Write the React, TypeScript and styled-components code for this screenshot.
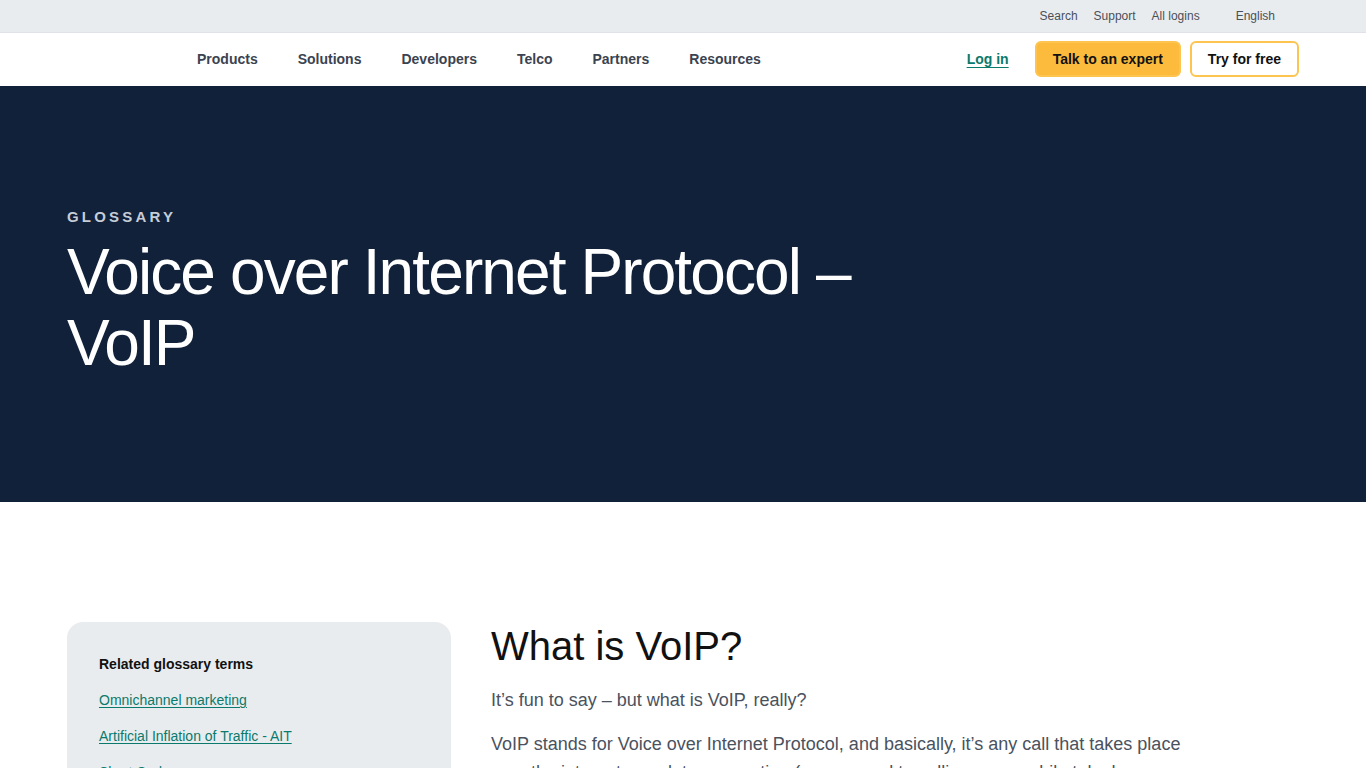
import React from "react";
import styled, { createGlobalStyle } from "styled-components";

const GlobalStyle = createGlobalStyle`
  html, body {
    margin: 0;
    padding: 0;
    background: #ffffff;
    font-family: "Liberation Sans", Arial, sans-serif;
  }
  * {
    box-sizing: border-box;
  }
`;

const TopBar = styled.div`
  height: 33px;
  background-color: #e9ecef;
  border-bottom: 1px solid #dfe3e7;
  display: flex;
  justify-content: flex-end;
  align-items: center;
  padding-right: 91px;
`;

const TopLinks = styled.div`
  display: flex;
  align-items: center;
  gap: 16px;
`;

const TopLink = styled.a<{ $spaced?: boolean }>`
  font-size: 12px;
  color: #4a5058;
  text-decoration: none;
  margin-left: ${(p) => (p.$spaced ? "20px" : "0")};
`;

const NavBar = styled.nav`
  height: 53px;
  background-color: #ffffff;
  display: flex;
  align-items: center;
  padding: 0 67px 2px 197px;
`;

const NavLinks = styled.div`
  display: flex;
  align-items: center;
  gap: 40px;
  flex: 1;
`;

const NavLink = styled.a`
  font-size: 14px;
  font-weight: 700;
  color: #3b4350;
  text-decoration: none;
`;

const NavActions = styled.div`
  display: flex;
  align-items: center;
`;

const LoginLink = styled.a`
  font-size: 14px;
  font-weight: 700;
  color: #0a7a6c;
  text-decoration: underline;
  text-underline-offset: 3px;
  margin-right: 26px;
`;

const Button = styled.a<{ $variant: "solid" | "outline" }>`
  display: inline-flex;
  align-items: center;
  justify-content: center;
  height: 36px;
  padding: 0 16px;
  border-radius: 6px;
  font-size: 14px;
  font-weight: 700;
  color: #111111;
  text-decoration: none;
  background-color: ${(p) => (p.$variant === "solid" ? "#fdbb3d" : "#ffffff")};
  border: 2px solid #fdc550;
  margin-left: ${(p) => (p.$variant === "outline" ? "9px" : "0")};
`;

const Hero = styled.header`
  background-color: #12213a;
  height: 416px;
  padding: 122px 67px 0;
`;

const Eyebrow = styled.div`
  font-size: 15px;
  font-weight: 700;
  letter-spacing: 3.2px;
  color: #c5cdd8;
  margin-bottom: 12px;
`;

const HeroTitle = styled.h1`
  margin: 0;
  max-width: 830px;
  font-size: 64px;
  font-weight: 400;
  line-height: 71px;
  letter-spacing: -1.9px;
  color: #ffffff;
`;

const Body = styled.main`
  display: grid;
  grid-template-columns: 384px 1fr;
  column-gap: 40px;
  padding: 120px 67px 0;
`;

const Sidebar = styled.aside`
  background-color: #e9ecef;
  border-radius: 16px;
  padding: 34px 32px;
  min-height: 200px;
`;

const SidebarTitle = styled.h4`
  margin: 0 0 19px;
  font-size: 14px;
  font-weight: 700;
  color: #111111;
`;

const TermList = styled.ul`
  list-style: none;
  margin: 0;
  padding: 0;
  display: flex;
  flex-direction: column;
  gap: 18px;
`;

const TermLink = styled.a`
  font-size: 14px;
  color: #0a7a6c;
  text-decoration: underline;
  text-underline-offset: 2px;
`;

const Article = styled.article`
  max-width: 700px;
`;

const SectionTitle = styled.h2`
  margin: 0 0 16px;
  font-size: 40px;
  font-weight: 400;
  line-height: 48px;
  color: #111111;
`;

const Paragraph = styled.p`
  margin: 0 0 16px;
  font-size: 18px;
  line-height: 28px;
  color: #4a525e;
`;

const navItems = ["Products", "Solutions", "Developers", "Telco", "Partners", "Resources"];
const terms = ["Omnichannel marketing", "Artificial Inflation of Traffic - AIT", "Short Code"];

export default function App() {
  return (
    <>
      <GlobalStyle />
      <TopBar>
        <TopLinks>
          <TopLink href="#">Search</TopLink>
          <TopLink href="#">Support</TopLink>
          <TopLink href="#">All logins</TopLink>
          <TopLink href="#" $spaced>
            English
          </TopLink>
        </TopLinks>
      </TopBar>
      <NavBar>
        <NavLinks>
          {navItems.map((item) => (
            <NavLink key={item} href="#">
              {item}
            </NavLink>
          ))}
        </NavLinks>
        <NavActions>
          <LoginLink href="#">Log in</LoginLink>
          <Button $variant="solid" href="#">
            Talk to an expert
          </Button>
          <Button $variant="outline" href="#">
            Try for free
          </Button>
        </NavActions>
      </NavBar>
      <Hero>
        <Eyebrow>GLOSSARY</Eyebrow>
        <HeroTitle>Voice over Internet Protocol – VoIP</HeroTitle>
      </Hero>
      <Body>
        <Sidebar>
          <SidebarTitle>Related glossary terms</SidebarTitle>
          <TermList>
            {terms.map((t) => (
              <li key={t}>
                <TermLink href="#">{t}</TermLink>
              </li>
            ))}
          </TermList>
        </Sidebar>
        <Article>
          <SectionTitle>What is VoIP?</SectionTitle>
          <Paragraph>It’s fun to say – but what is VoIP, really?</Paragraph>
          <Paragraph>
            VoIP stands for Voice over Internet Protocol, and basically, it’s any call that takes place
            over the internet or a data connection (as opposed to calling on a mobile telephone network).
          </Paragraph>
        </Article>
      </Body>
    </>
  );
}
